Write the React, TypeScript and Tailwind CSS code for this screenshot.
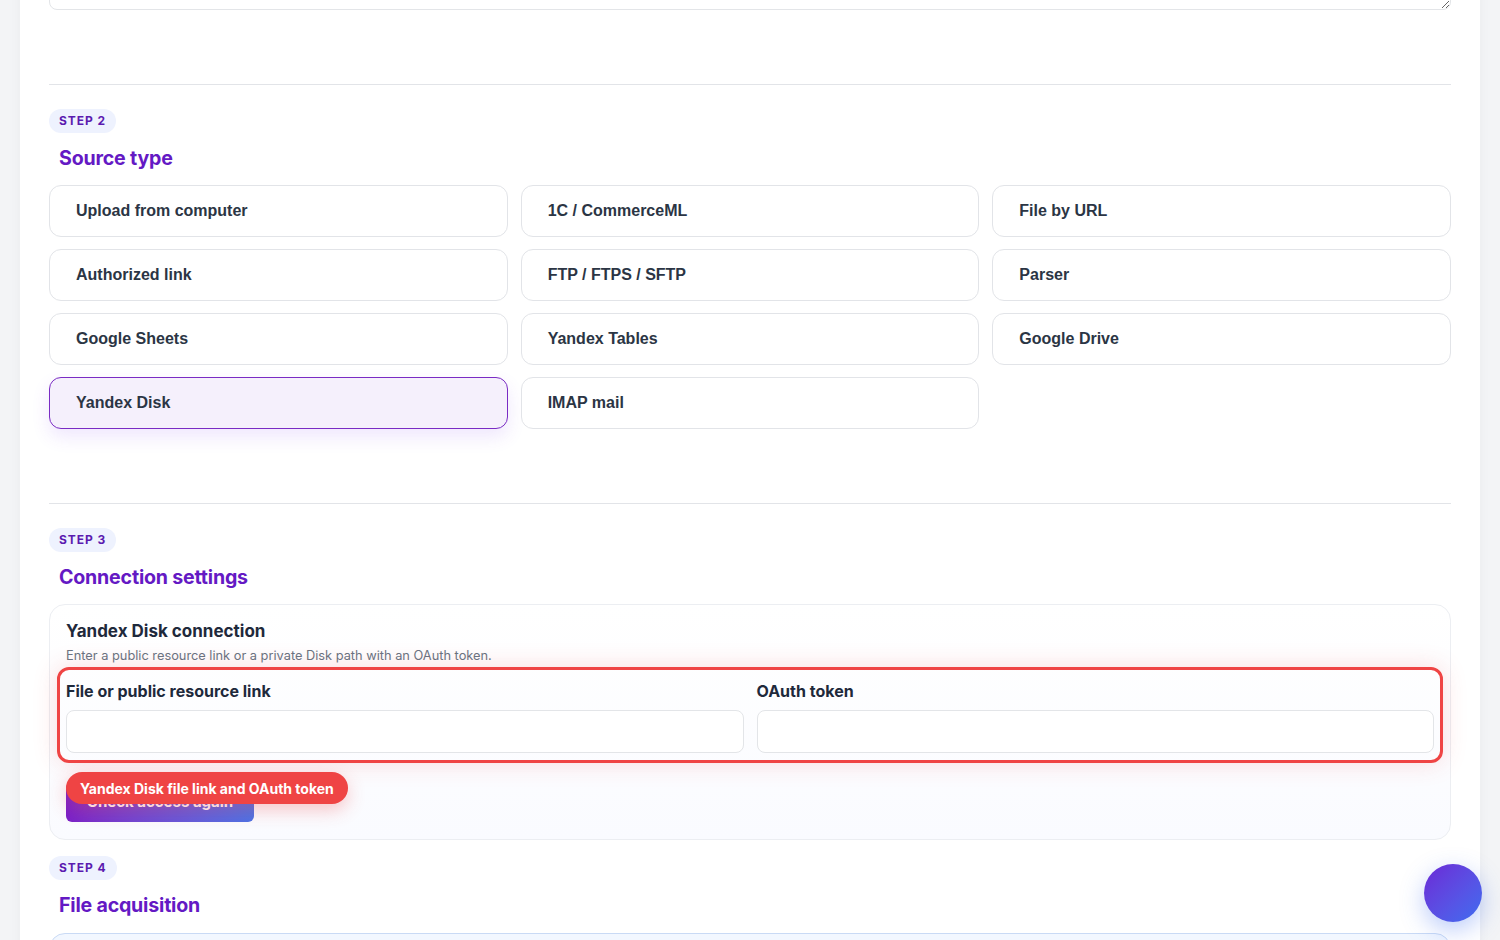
const sources = [
  "Upload from computer",
  "1C / CommerceML",
  "File by URL",
  "Authorized link",
  "FTP / FTPS / SFTP",
  "Parser",
  "Google Sheets",
  "Yandex Tables",
  "Google Drive",
  "Yandex Disk",
  "IMAP mail",
];

function StepPill({ n }: { n: number }) {
  return (
    <div className="inline-flex h-[24px] items-center rounded-full bg-[#eef2fe] px-[10px] text-[12px] font-bold tracking-[0.08em] text-[#5b1bb0]">
      STEP {n}
    </div>
  );
}

function Heading({ children }: { children: string }) {
  return (
    <h2 className="mt-[12px] pl-[10px] text-[19.6px] font-bold leading-[26px] tracking-[-0.01em] text-[#6419c4]">
      {children}
    </h2>
  );
}

export default function App() {
  const selected = "Yandex Disk";

  return (
    <div className="relative h-[940px] overflow-hidden bg-[#f3f4f6] font-['Inter',sans-serif]">
      <div className="mx-[20px] min-h-[1100px] bg-white px-[29px] shadow-[0_0_12px_rgba(15,23,42,0.04)]">
        {/* previous step textarea, scrolled */}
        <textarea
          className="mt-[-50px] block h-[60px] w-full rounded-lg border border-[#e3e5e8] bg-white"
          readOnly
        />

        <div className="mt-[74px] border-t border-[#e2e4e8]" />

        {/* step 2 */}
        <div className="pt-[22px]">
          <StepPill n={2} />
          <Heading>Source type</Heading>
          <div className="mt-[14px] grid grid-cols-3 gap-x-[13px] gap-y-[12px]">
            {sources.map((s) => (
              <button
                key={s}
                className={
                  s === selected
                    ? "flex h-[52px] items-center rounded-xl border border-[#7a2bc4] bg-[#f5f0fc] pl-[26px] text-left font-['Liberation_Sans',Arial,sans-serif] text-[16px] font-bold text-[#2b3544] shadow-[0_8px_18px_rgba(124,58,237,0.12)]"
                    : "flex h-[52px] items-center rounded-xl border border-[#e2e4e8] bg-white pl-[26px] text-left font-['Liberation_Sans',Arial,sans-serif] text-[16px] font-bold text-[#2b3544]"
                }
              >
                {s}
              </button>
            ))}
          </div>
        </div>

        <div className="mt-[74px] border-t border-[#e2e4e8]" />

        {/* step 3 */}
        <div className="pt-[22px]">
          <StepPill n={3} />
          <Heading>Connection settings</Heading>
          <div className="mt-[14px] rounded-2xl border border-[#eceef2] bg-gradient-to-b from-white to-[#fafbff] px-[16px] pb-[17px] pt-[15px]">
            <div className="text-[17px] font-bold leading-[22px] text-[#1e293b]">Yandex Disk connection</div>
            <div className="mt-[4px] text-[12.8px] leading-[20px] text-[#6b7280]">
              Enter a public resource link or a private Disk path with an OAuth token.
            </div>

            <div className="mx-[-9px] mt-[1px] rounded-xl border-[3px] border-[#ef4444] px-[6px] pb-[7px] pt-[10px] shadow-[0_0_24px_rgba(239,68,68,0.18)]">
              <div className="grid grid-cols-2 gap-x-[13px]">
                <div>
                  <div className="text-[16px] font-bold leading-[22px] text-[#1e293b]">File or public resource link</div>
                  <input className="mt-[8px] block h-[43px] w-full rounded-lg border border-[#e3e5e8] bg-white" />
                </div>
                <div>
                  <div className="text-[16px] font-bold leading-[22px] text-[#1e293b]">OAuth token</div>
                  <input className="mt-[8px] block h-[43px] w-full rounded-lg border border-[#e3e5e8] bg-white" />
                </div>
              </div>
            </div>

            <div className="relative mt-[19px] h-[40px]">
              <button className="h-[40px] w-[188px] rounded-md bg-gradient-to-r from-[#7b1fc8] to-[#4a72e6] text-[15px] font-bold text-white">
                Check access again
              </button>
              <div className="absolute left-0 top-[-10px] flex h-[32px] items-center rounded-full bg-[#ef4444] px-[14px] text-[14px] font-bold text-white shadow-[0_6px_18px_rgba(239,68,68,0.3)]">
                Yandex Disk file link and OAuth token
              </div>
            </div>
          </div>
        </div>

        {/* step 4 */}
        <div className="pt-[14px]">
          <StepPill n={4} />
          <Heading>File acquisition</Heading>
          <div className="mt-[15px] h-[60px] rounded-2xl border border-[#c9daf5] bg-[#f2f7ff]" />
        </div>
      </div>

      <button className="absolute left-[1424px] top-[864px] h-[58px] w-[58px] rounded-full bg-gradient-to-br from-[#6a25d6] to-[#3b6cf0] shadow-[0_8px_24px_rgba(59,108,240,0.35)]" />
    </div>
  );
}
